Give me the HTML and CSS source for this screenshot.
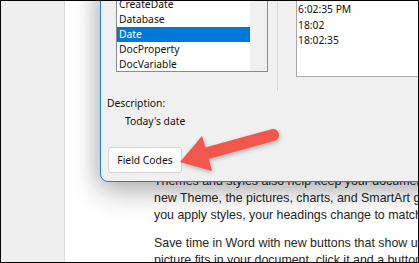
FILE: index.html
```html
<!DOCTYPE html>
<html lang="en">
<head>
    <meta charset="utf-8">
    <title>Field dialog</title>
    <link rel="stylesheet" href="styles.css">
</head>
<body>
    <div class="frame">
        <div class="gutter"></div>
        <div class="page">
            <p>Themes and styles also help keep your document coordinated. When you click Design and choose a<br>
               new Theme, the pictures, charts, and SmartArt graphics change to match your new theme. When<br>
               you apply styles, your headings change to match the new theme.</p>
            <p class="para">Save time in Word with new buttons that show up where you need them. To change the way a<br>
               picture fits in your document, click it and a button for layout options appears next to it.</p>
        </div>

        <div class="dialog">
            <div class="top-row">
                <div class="listbox">
                    <ul class="items">
                        <li>CreateDate</li>
                        <li>Database</li>
                        <li class="selected">Date</li>
                        <li>DocProperty</li>
                        <li>DocVariable</li>
                    </ul>
                    <div class="scrollbar"></div>
                </div>
                <div class="separator"></div>
                <div class="formats">
                    <div>6:02:35 PM</div>
                    <div>18:02</div>
                    <div>18:02:35</div>
                </div>
            </div>
            <div class="label">Description:</div>
            <div class="desc">Today's date</div>
            <button class="btn">Field Codes</button>
        </div>

        <svg class="arrow" width="419" height="263" viewBox="0 0 419 263">
            <line x1="204" y1="154" x2="273" y2="135" stroke="#f2574b" stroke-width="12" stroke-linecap="round"/>
            <polygon points="180,162 202,136 207,152 212,171" fill="#f2574b"/>
        </svg>
    </div>
</body>
</html>
```

FILE: styles.css
```css
html, body {
    margin: 0;
    padding: 0;
    background: #efefef;
}
.frame {
    position: relative;
    width: 419px;
    height: 263px;
    box-sizing: border-box;
    border: 1px solid #000;
    overflow: hidden;
    display: flex;
    background: #efefef;
}
.gutter {
    width: 63px;
    flex: none;
    background: #efefef;
    border-right: 1px solid #dadada;
}
.page {
    flex: 1;
    background: #fff;
    padding: 172px 0 0 89px;
    font-family: "Liberation Sans", Arial, sans-serif;
    font-size: 12.4px;
    line-height: 17px;
    color: #262626;
    white-space: nowrap;
}
.page p {
    margin: 0;
}
.page .para {
    margin-top: 11px;
}

.dialog {
    position: absolute;
    left: 99px;
    top: -20px;
    width: 360px;
    height: 201px;
    box-sizing: border-box;
    background: #f0f0f0;
    border: 1px solid #1a82d6;
    border-radius: 0 0 0 8px;
    box-shadow: 0 10px 30px rgba(0,0,0,0.28), -4px 0 18px rgba(0,0,0,0.12);
    font-family: "Noto Sans", "Open Sans", sans-serif;
    font-size: 10.3px;
    color: #111;
}
.top-row {
    display: flex;
    align-items: flex-start;
    margin: 14px 0 0 15px;
}
.listbox {
    width: 152px;
    height: 76px;
    box-sizing: border-box;
    border: 1px solid #8a8a8a;
    background: #fff;
    display: flex;
}
.items {
    list-style: none;
    margin: 0;
    padding: 0;
    width: 133px;
}
.items li {
    height: 15px;
    line-height: 15px;
    padding-left: 2px;
}
.items li.selected {
    background: #0078d7;
    color: #fff;
}
.scrollbar {
    flex: 1;
    background: #f0f0f0;
}
.separator {
    width: 1px;
    height: 95px;
    margin-left: 9px;
    background: #d5d5d5;
}
.formats {
    width: 140px;
    height: 81px;
    box-sizing: border-box;
    margin-left: 18px;
    border: 1px solid #a8a8a8;
    background: #fff;
    padding: 5px 0 0 1px;
    line-height: 15.5px;
}
.label {
    margin: 5px 0 0 6px;
    line-height: 15px;
}
.desc {
    margin: 3px 0 0 24px;
    line-height: 15px;
}
.btn {
    display: block;
    margin: 18px 0 0 7px;
    width: 74px;
    height: 26px;
    padding: 0;
    background: #fdfdfd;
    border: 1px solid #d6d6d6;
    border-radius: 3px;
    font-family: "Noto Sans", "Open Sans", sans-serif;
    font-size: 10.3px;
    color: #111;
}

.arrow {
    position: absolute;
    left: -1px;
    top: -1px;
    pointer-events: none;
    filter: drop-shadow(1px 2px 2px rgba(0,0,0,0.25));
}
```
